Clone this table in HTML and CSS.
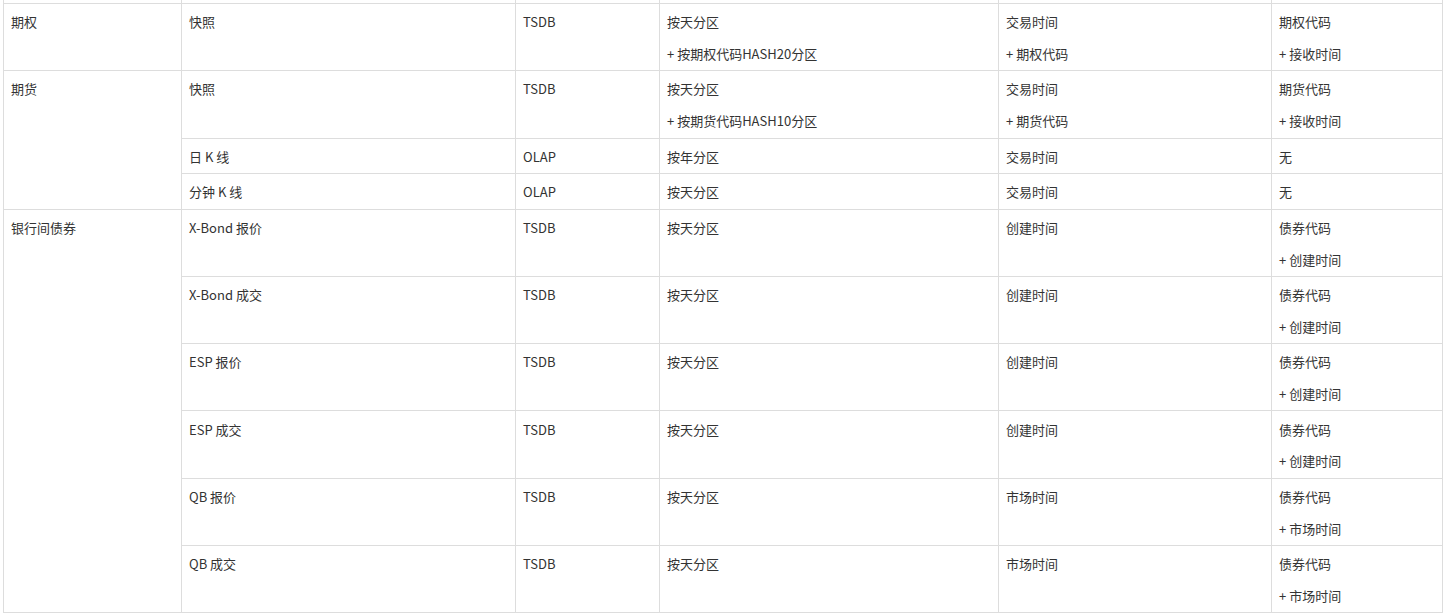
FILE: index.html
```html
<!DOCTYPE html>
<html lang="zh">
<head>
<meta charset="utf-8">
<link rel="stylesheet" href="styles.css">
</head>
<body>
<table class="grid">
  <colgroup>
    <col class="c1"><col class="c2"><col class="c3"><col class="c4"><col class="c5"><col class="c6">
  </colgroup>
  <tbody>
    <tr class="stub"><td></td><td></td><td></td><td></td><td></td><td></td></tr>
    <tr>
      <td>期权</td><td>快照</td><td>TSDB</td>
      <td><div>按天分区</div><div>+ 按期权代码HASH20分区</div></td>
      <td><div>交易时间</div><div>+ 期权代码</div></td>
      <td><div>期权代码</div><div>+ 接收时间</div></td>
    </tr>
    <tr>
      <td rowspan="3">期货</td><td>快照</td><td>TSDB</td>
      <td><div>按天分区</div><div>+ 按期货代码HASH10分区</div></td>
      <td><div>交易时间</div><div>+ 期货代码</div></td>
      <td><div>期货代码</div><div>+ 接收时间</div></td>
    </tr>
    <tr>
      <td>日 K 线</td><td>OLAP</td><td>按年分区</td><td>交易时间</td><td>无</td>
    </tr>
    <tr>
      <td>分钟 K 线</td><td>OLAP</td><td>按天分区</td><td>交易时间</td><td>无</td>
    </tr>
    <tr>
      <td rowspan="6">银行间债券</td><td>X-Bond 报价</td><td>TSDB</td><td>按天分区</td><td>创建时间</td>
      <td><div>债券代码</div><div>+ 创建时间</div></td>
    </tr>
    <tr>
      <td>X-Bond 成交</td><td>TSDB</td><td>按天分区</td><td>创建时间</td>
      <td><div>债券代码</div><div>+ 创建时间</div></td>
    </tr>
    <tr>
      <td>ESP 报价</td><td>TSDB</td><td>按天分区</td><td>创建时间</td>
      <td><div>债券代码</div><div>+ 创建时间</div></td>
    </tr>
    <tr>
      <td>ESP 成交</td><td>TSDB</td><td>按天分区</td><td>创建时间</td>
      <td><div>债券代码</div><div>+ 创建时间</div></td>
    </tr>
    <tr>
      <td>QB 报价</td><td>TSDB</td><td>按天分区</td><td>市场时间</td>
      <td><div>债券代码</div><div>+ 市场时间</div></td>
    </tr>
    <tr>
      <td>QB 成交</td><td>TSDB</td><td>按天分区</td><td>市场时间</td>
      <td><div>债券代码</div><div>+ 市场时间</div></td>
    </tr>
  </tbody>
</table>
</body>
</html>
```

FILE: styles.css
```css
html, body {
  margin: 0;
  padding: 0;
  background: #ffffff;
}
body {
  font-family: "Noto Sans CJK SC", "Noto Sans", sans-serif;
  font-size: 13px;
  color: #333333;
  overflow: hidden;
}
.grid {
  margin-left: 3px;
  width: 1439px;
  table-layout: fixed;
  border-collapse: collapse;
}
.c1 { width: 178px; }
.c2 { width: 334px; }
.c3 { width: 144px; }
.c4 { width: 339px; }
.c5 { width: 273px; }
.c6 { width: 171px; }
.grid td {
  border: 1px solid #dddddd;
  padding: 2.2px 7px 0.5px;
  vertical-align: top;
  line-height: 31.8px;
  text-align: left;
}
.grid .stub td {
  border-top: none;
  height: 3px;
  padding: 0;
  line-height: 0;
}
```
